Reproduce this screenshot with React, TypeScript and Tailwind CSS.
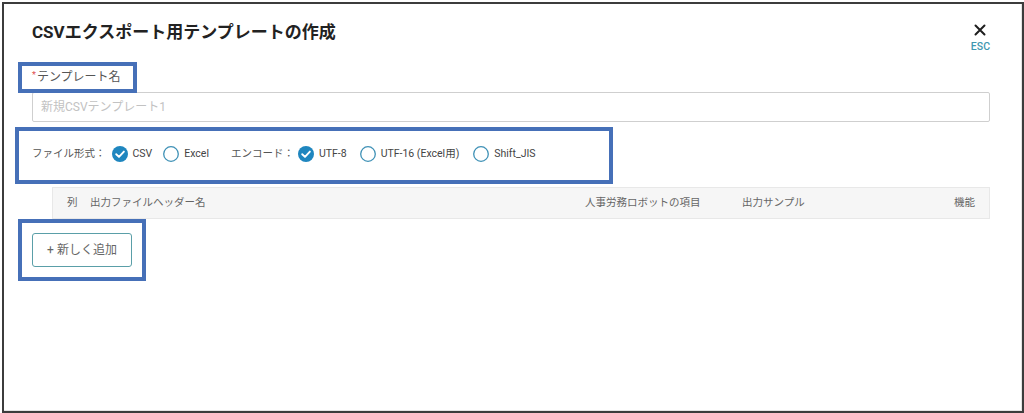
import React from "react";

const FONT = 'Roboto, "Noto Sans CJK JP", "Noto Sans", sans-serif';

function Radio({ checked, label, className = "" }: { checked: boolean; label: string; className?: string }) {
  return (
    <span className={"flex items-center " + className}>
      {checked ? (
        <svg width="16" height="16" viewBox="0 0 16 16" className="shrink-0">
          <circle cx="8" cy="8" r="8" fill="#1f86bf" />
          <path d="M4.2 8.2 L7 10.9 L11.9 5.6" fill="none" stroke="#fff" strokeWidth="1.9" strokeLinecap="round" strokeLinejoin="round" />
        </svg>
      ) : (
        <svg width="16" height="16" viewBox="0 0 16 16" className="shrink-0">
          <circle cx="8" cy="8" r="7.3" fill="#fff" stroke="#3f91b6" strokeWidth="1.3" />
        </svg>
      )}
      <span className="ml-[5px] text-[10.5px] leading-[16px] text-[#444]">{label}</span>
    </span>
  );
}

function Mark({ className }: { className: string }) {
  return <span className={"pointer-events-none absolute border-[4px] border-[#4670b8] " + className} />;
}

export default function App() {
  return (
    <div className="w-[1024px] h-[413px] bg-white pl-[2px] pt-[2px]" style={{ fontFamily: FONT }}>
      <div className="h-full w-full border-2 border-[#3c3c3c]">
        <div className="h-full w-full border-r border-b border-[#e4e4e4] pl-[28px] pr-[31px] pt-[16px]">
          {/* header */}
          <div className="flex items-start justify-between">
            <h2 className="text-[17px] leading-[24px] font-bold text-[#222]">CSVエクスポート用テンプレートの作成</h2>
            <div className="flex flex-col items-center mt-[4px]">
              <svg width="12" height="12" viewBox="0 0 12 12">
                <path d="M1.5 1.5 L10.5 10.5 M10.5 1.5 L1.5 10.5" stroke="#1e1e1e" strokeWidth="2" strokeLinecap="round" />
              </svg>
              <span className="mt-[5px] text-[10.5px] leading-[12px] font-medium text-[#3f97b0]">ESC</span>
            </div>
          </div>

          {/* template name */}
          <div className="mt-[16px] flex">
            <span className="relative flex items-start text-[12px] leading-[16px] text-[#555]">
              <span className="text-[#e05050] text-[9px] leading-[12px] mr-[1px]">*</span>
              テンプレート名
              <Mark className="left-[-14px] top-[-7px] w-[119px] h-[31px]" />
            </span>
          </div>
          <div className="mt-[7px] h-[30px] border border-[#cfcfcf] rounded-[2px] flex items-center px-[8px]">
            <span className="text-[12px] text-[#c2c2c2]">新規CSVテンプレート1</span>
          </div>

          {/* format / encoding */}
          <div className="mt-[22px] flex">
            <div className="relative flex items-center h-[20px]">
              <span className="text-[10.5px] text-[#555] mr-[6px]">ファイル形式：</span>
              <Radio checked label="CSV" />
              <Radio checked={false} label="Excel" className="ml-[11px]" />
              <span className="ml-[22px] text-[10.5px] text-[#555] mr-[4px]">エンコード：</span>
              <Radio checked label="UTF-8" />
              <Radio checked={false} label="UTF-16 (Excel用)" className="ml-[13px]" />
              <Radio checked={false} label="Shift_JIS" className="ml-[14px]" />
              <Mark className="left-[-17px] top-[-17px] w-[598px] h-[57px]" />
            </div>
          </div>

          {/* column table header */}
          <div className="mt-[23px] ml-[20px] h-[32px] bg-[#f6f6f6] border border-[#e8e8e8] flex items-center pl-[14px] pr-[14px] text-[10.5px] text-[#666]">
            <span className="w-[23px]">列</span>
            <span className="w-[495px]">出力ファイルヘッダー名</span>
            <span className="w-[157px]">人事労務ロボットの項目</span>
            <span className="flex-1">出力サンプル</span>
            <span>機能</span>
          </div>

          {/* add button */}
          <div className="mt-[14px] flex">
            <button className="relative w-[100px] h-[34px] border border-[#5a9fa8] rounded-[3px] bg-white text-[12px] text-[#666] flex items-center justify-center">
              + 新しく追加
              <Mark className="left-[-15px] top-[-15px] w-[128px] h-[62px]" />
            </button>
          </div>
        </div>
      </div>
    </div>
  );
}
